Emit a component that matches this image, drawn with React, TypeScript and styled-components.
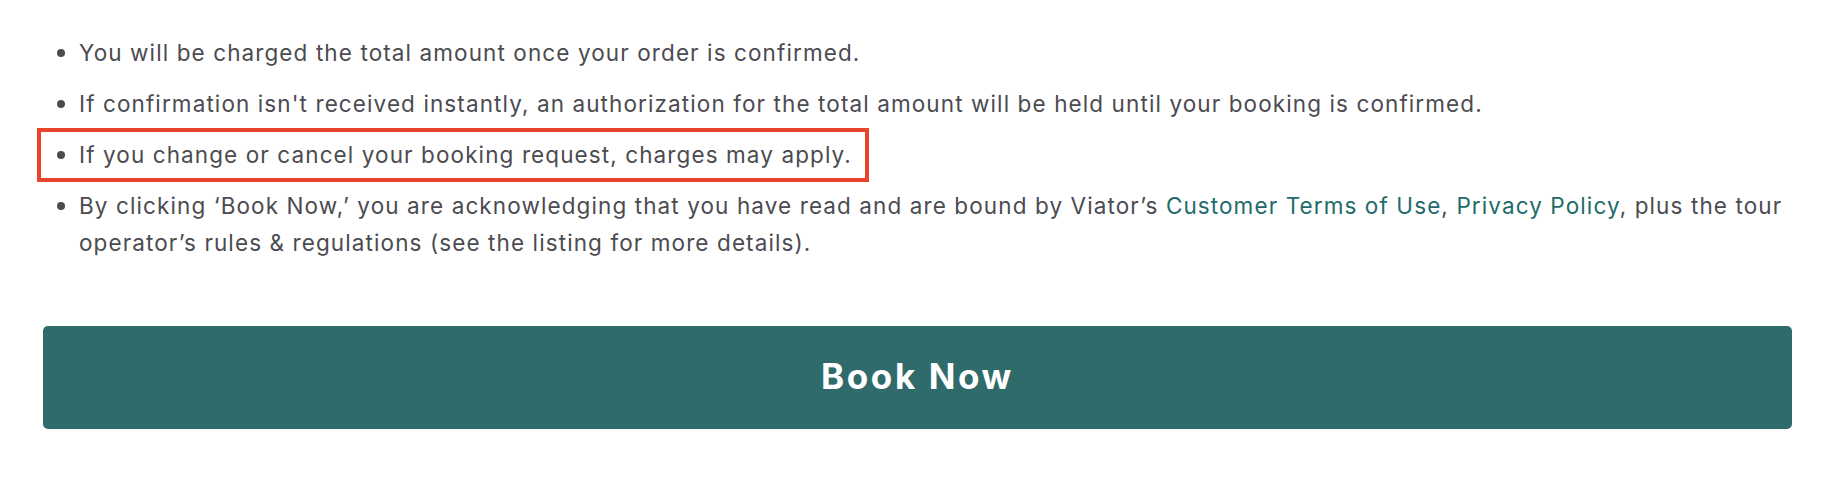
import React from "react";
import styled, { createGlobalStyle } from "styled-components";

const Global = createGlobalStyle`
  html, body { margin: 0; padding: 0; background: #ffffff; }
  body { font-family: Inter, "Open Sans", sans-serif; }
`;

const Page = styled.div`
  padding: 34px 38px 0 43px;
  box-sizing: border-box;
  width: 1830px;
  height: 496px;
`;

const List = styled.ul`
  list-style: none;
  margin: 0;
  padding: 0;
  display: flex;
  flex-direction: column;
  gap: 14px;
`;

const Item = styled.li<{ $highlight?: boolean }>`
  position: relative;
  padding-left: 36px;
  font-size: 22.5px;
  line-height: 37px;
  letter-spacing: 1.1px;
  color: #4b4b51;
  width: ${(p) => (p.$highlight ? "fit-content" : "auto")};

  &::before {
    content: "";
    position: absolute;
    left: 14px;
    top: 15px;
    width: 8px;
    height: 8px;
    border-radius: 50%;
    background: #4b4b51;
  }

  ${(p) =>
    p.$highlight &&
    `
    &::after {
      content: "";
      position: absolute;
      top: -8px;
      bottom: -9px;
      left: -6px;
      right: -17px;
      border: 4.5px solid #e8442b;
      pointer-events: none;
    }
  `}
`;

const Link = styled.a`
  color: #226b69;
  text-decoration: none;
`;

const BookButton = styled.button`
  display: flex;
  align-items: center;
  justify-content: center;
  width: 100%;
  height: 103px;
  margin-top: 65px;
  border: none;
  border-radius: 5px;
  background: #2f6b6b;
  color: #ffffff;
  font-family: Inter, "Open Sans", sans-serif;
  font-weight: 700;
  font-size: 35px;
  letter-spacing: 2.6px;
  cursor: pointer;
  padding: 0 0 3px;
`;

export default function App() {
  return (
    <Page>
      <Global />
      <List>
        <Item>You will be charged the total amount once your order is confirmed.</Item>
        <Item>
          If confirmation isn't received instantly, an authorization for the total amount will be held until your booking is confirmed.
        </Item>
        <Item $highlight>If you change or cancel your booking request, charges may apply.</Item>
        <Item>
          By clicking ‘Book Now,’ you are acknowledging that you have read and are bound by Viator’s{" "}
          <Link href="#">Customer Terms of Use</Link>, <Link href="#">Privacy Policy</Link>, plus the tour
          operator’s rules &amp; regulations (see the listing for more details).
        </Item>
      </List>
      <BookButton>Book Now</BookButton>
    </Page>
  );
}
